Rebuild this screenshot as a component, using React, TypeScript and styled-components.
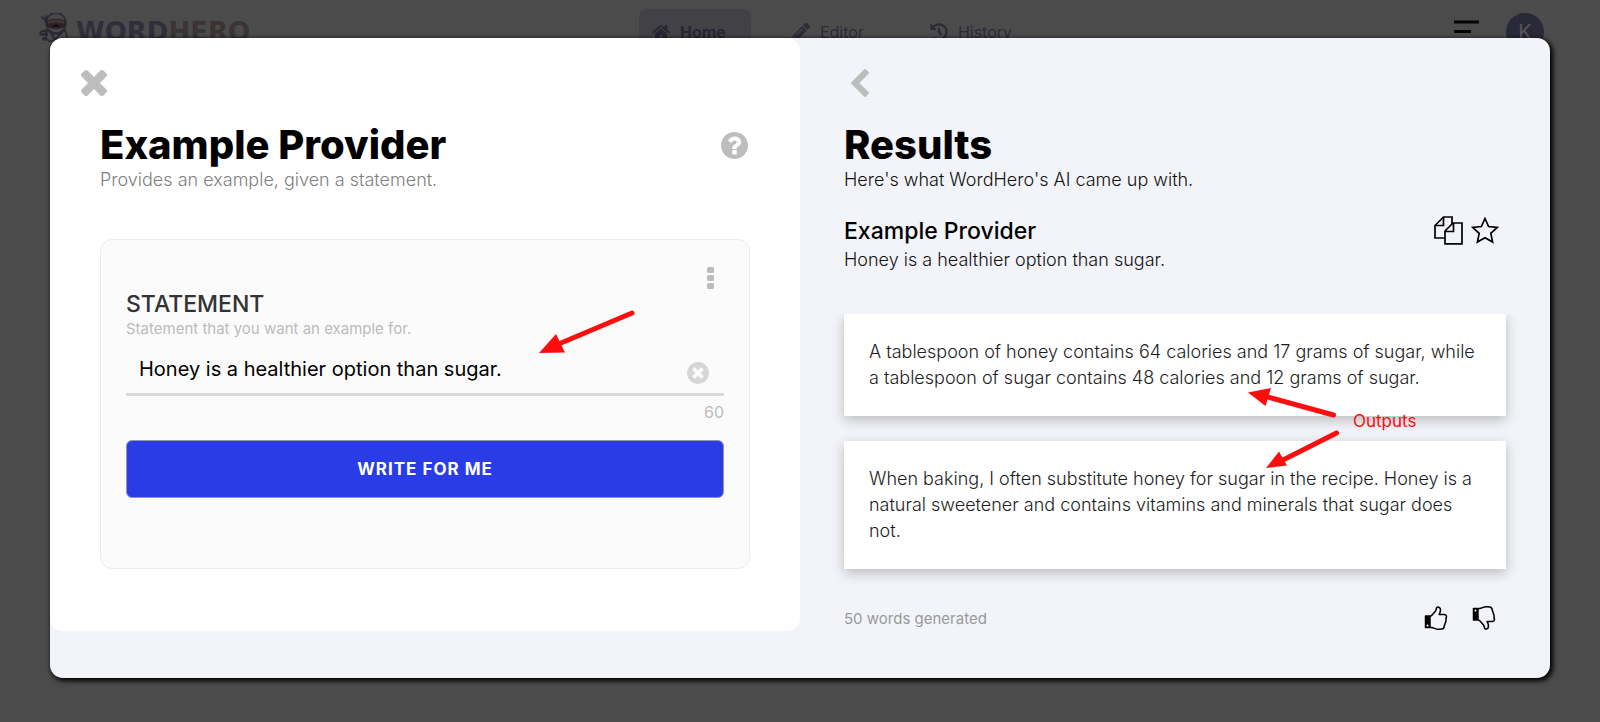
import React, { useState } from 'react';
import styled, { createGlobalStyle } from 'styled-components';
import { FaHistory, FaHome, FaPencilAlt } from 'react-icons/fa';

const GlobalStyle = createGlobalStyle`
  *, *::before, *::after { box-sizing: border-box; }
  body {
    margin: 0;
    background: #4b4b4b;
    color: #000;
    font-family: Inter, "Liberation Sans", sans-serif;
  }
  h1, h2, p, ul { margin: 0; padding: 0; }
  button, input { font: inherit; }
`;

const Page = styled.div`
  position: relative;
  min-height: 100vh;
`;

/* ---------- Dimmed site header ---------- */

const Header = styled.header`
  display: flex;
  align-items: center;
  justify-content: space-between;
  height: 64px;
  padding: 0 56px 0 39px;
  color: #2c2a3a;
`;

const Brand = styled.a`
  display: flex;
  align-items: flex-start;
  gap: 7px;
  flex: none;
  color: #302e3b;
  text-decoration: none;
  font: 700 26px/38px "DejaVu Sans", sans-serif;
`;

const BrandTail = styled.span`
  color: #3a3434;
`;

const Nav = styled.nav`
  display: flex;
  gap: 28px;
  padding-right: 28px;
`;

const NavLink = styled.a<{ $active?: boolean }>`
  display: flex;
  align-items: center;
  gap: 10px;
  height: 46px;
  padding: 0 25px 0 13px;
  border-radius: 8px;
  background: ${({ $active }) => ($active ? '#424146' : 'transparent')};
  color: ${({ $active }) => ($active ? '#272534' : '#2c2b36')};
  font-size: 16px;
  font-weight: ${({ $active }) => ($active ? 700 : 400)};
  text-decoration: none;

  svg { width: 18px; height: 18px; }
`;

const HeaderTools = styled.div`
  display: flex;
  align-items: center;
  gap: 27px;
`;

const Avatar = styled.button`
  width: 38px;
  height: 38px;
  padding: 0;
  border: 0;
  border-radius: 50%;
  background: #2a2938;
  color: #55555a;
  font-size: 20px;
`;

/* ---------- Dialog ---------- */

const DialogLayer = styled.div`
  position: absolute;
  inset: 0;
  padding: 38px 50px 44px;
`;

const Dialog = styled.main`
  display: grid;
  grid-template-columns: 1fr 1fr;
  align-items: start;
  border-radius: 13px;
  background: #f3f4f9;
  box-shadow: 2px 2px 5px 1px #000;
`;

const ToolPanel = styled.section`
  padding: 31px 50px 62px;
  border-radius: 13px;
  background: #fff;
`;

const ResultsPanel = styled.section`
  padding: 31px 44px 48px;
`;

const IconButton = styled.button`
  display: inline-flex;
  align-items: center;
  justify-content: center;
  flex: none;
  padding: 0;
  border: 0;
  background: none;
  color: inherit;
  cursor: pointer;

  svg { display: block; }
`;

const PanelTop = styled.div<{ $indent: string }>`
  display: flex;
  height: 28px;
  margin: 0 0 24px ${({ $indent }) => $indent};
  color: #bcbdbd;
`;

const TitleRow = styled.div`
  display: flex;
  align-items: center;
  justify-content: space-between;
  padding-right: 2px;
  color: #bcbdbd;
`;

const Title = styled.h1`
  color: #000;
  font-size: 40px;
  font-weight: 800;
  line-height: 48px;
`;

const Lead = styled.p<{ $muted?: boolean }>`
  color: ${({ $muted }) => ($muted ? '#808080' : '#111')};
  font-size: 18px;
  font-weight: 300;
  line-height: 22px;
`;

/* ---------- Form ---------- */

const FormCard = styled.form`
  position: relative;
  margin-top: 48px;
  padding: 25px 25px 70px;
  border: 1px solid #ececec;
  border-radius: 12px;
  background: #fbfbfb;
`;

const FormMenu = styled.div`
  display: flex;
  justify-content: flex-end;
  height: 25px;
  padding-right: 10px;
  color: #bcbcbc;
`;

const FieldLabel = styled.label`
  display: block;
  color: #333;
  font-size: 23px;
  font-weight: 500;
  line-height: 28px;
`;

const FieldHelp = styled.p`
  color: #bcbcbc;
  font-size: 15px;
  line-height: 22px;
`;

const FieldBox = styled.div`
  display: flex;
  align-items: center;
  height: 49px;
  margin-top: 7px;
  padding: 0 15px 0 13px;
  border-bottom: 3px solid #d9d9d9;
  color: #d6d6d6;

  button { padding-top: 6px; }
`;

const FieldInput = styled.input`
  flex: 1;
  min-width: 0;
  padding: 0 0 2px;
  border: 0;
  outline: 0;
  background: transparent;
  color: #000;
  font-size: 20px;
  line-height: 28px;
`;

const Counter = styled.p`
  margin: 6px 0 18px;
  color: #bcbcbc;
  font-size: 16px;
  line-height: 20px;
  text-align: right;
`;

const SubmitButton = styled.button`
  display: block;
  width: 100%;
  height: 58px;
  border: 1px solid #8f94b8;
  border-radius: 6px;
  background: #293ce5;
  color: #fff;
  font-size: 17px;
  font-weight: 700;
  letter-spacing: 1px;
  cursor: pointer;
`;

/* ---------- Results ---------- */

const ResultHead = styled.div`
  display: flex;
  align-items: flex-start;
  justify-content: space-between;
  margin-top: 25px;
`;

const ResultTitle = styled.h2`
  font-size: 23px;
  font-weight: 500;
  line-height: 30px;
`;

const ResultQuery = styled.p`
  color: #111;
  font-size: 18px;
  font-weight: 300;
  line-height: 28px;
`;

const ResultTools = styled.div<{ $gap: string }>`
  display: flex;
  align-items: center;
  gap: ${({ $gap }) => $gap};
  padding-right: 7px;
  color: #000;
`;

const ResultArea = styled.div`
  position: relative;
  margin-top: 40px;
`;

const ResultList = styled.ul`
  display: grid;
  gap: 25px;
  margin: 0 -24px -24px;
  padding: 0 24px 24px;
  overflow: hidden;
  list-style: none;
`;

const ResultCard = styled.li`
  padding: 25px;
  background: #fff;
  box-shadow: 0 4px 12px rgba(0, 0, 0, 0.24);
  color: #1c1c1c;
  font-size: 18px;
  font-weight: 300;
  line-height: 26px;
`;

const ResultFooter = styled.footer`
  display: flex;
  align-items: center;
  justify-content: space-between;
  height: 24px;
  margin-top: 37px;
  padding-right: 3px;
  color: #999;
  font-size: 15px;
`;

/* ---------- Annotations laid over the dialog ---------- */

const ArrowMark = styled.svg<{ $left: string; $top: string }>`
  position: absolute;
  left: ${({ $left }) => $left};
  top: ${({ $top }) => $top};
  fill: #fd0d0d;
  stroke: #fd0d0d;
  stroke-linecap: round;
  pointer-events: none;
`;

const NoteMark = styled.span`
  position: absolute;
  left: 509px;
  top: 96px;
  color: #fd0d0d;
  font-size: 17px;
  line-height: 22px;
`;

type GlyphProps = { box: string; width: number; height: number; d: string };

const Glyph = ({ box, width, height, d }: GlyphProps) => (
  <svg viewBox={box} width={width} height={height} fill="currentColor" aria-hidden="true">
    <path d={d} />
  </svg>
);

const CLOSE =
  'M1490 1322q0 40-28 68l-136 136q-28 28-68 28t-68-28l-294-294-294 294q-28 28-68 28t-68-28l-136-136q-28-28-28-68t28-68l294-294-294-294q-28-28-28-68t28-68l136-136q28-28 68-28t68 28l294 294 294-294q28-28 68-28t68 28l136 136q28 28 28 68t-28 68l-294 294 294 294q28 28 28 68z';
const CHEVRON =
  'M1427 301l-531 531 531 531q19 19 19 45t-19 45l-166 166q-19 19-45 19t-45-19l-742-742q-19-19-19-45t19-45l742-742q19-19 45-19t45 19l166 166q19 19 19 45t-19 45z';
const QUESTION =
  'M1024 1376v-192q0-14-9-23t-23-9h-192q-14 0-23 9t-9 23v192q0 14 9 23t23 9h192q14 0 23-9t9-23zm256-672q0-88-55.5-163t-138.5-116-170-41q-243 0-371 213-15 24 8 42l132 100q7 6 19 6 16 0 25-12 53-68 86-92 34-24 86-24 48 0 85.5 26t37.5 59q0 38-20 61t-68 45q-63 28-115.5 86.5t-52.5 125.5v36q0 14 9 23t23 9h192q14 0 23-9t9-23q0-19 21.5-49.5t54.5-49.5q32-18 49-28.5t46-35 44.5-48 28-60.5 12.5-81zm384 192q0 209-103 385.5t-279.5 279.5-385.5 103-385.5-103-279.5-279.5-103-385.5 103-385.5 279.5-279.5 385.5-103 385.5 103 279.5 279.5 103 385.5z';
const CLEAR =
  'M1277 1122q0-26-19-45l-181-181 181-181q19-19 19-45 0-27-19-46l-90-90q-19-19-46-19-26 0-45 19l-181 181-181-181q-19-19-45-19-27 0-46 19l-90 90q-19 19-19 46 0 26 19 45l181 181-181 181q-19 19-19 45 0 27 19 46l90 90q19 19 46 19 26 0 45-19l181-181 181 181q19 19 45 19 27 0 46-19l90-90q19-19 19-46zm387-226q0 209-103 385.5t-279.5 279.5-385.5 103-385.5-103-279.5-279.5-103-385.5 103-385.5 279.5-279.5 385.5-103 385.5 103 279.5 279.5 103 385.5z';

const NinjaLogo = () => (
  <svg width="30" height="30" viewBox="0 0 30 30" aria-hidden="true">
    <path d="M6 9L1 3l5 1 1-3 3 5z" fill="#302c38" />
    <circle cx="17" cy="10" r="10" fill="#4a484e" stroke="#2b2733" strokeWidth="1.5" />
    <path d="M7 8q10-5 20 0v4q-2 4-10 4T7 12z" fill="#2c2222" />
    <path d="M9 8q8-3 16 0v3q-8-3-16 0z" fill="#3f3636" />
    <path d="M13 13q4-3 8 0l-1 1h-6z" fill="#151015" />
    <path d="M8 17l5 4h8l5-4 2 6-2 5H10l-4-4z" fill="#4a484e" stroke="#2b2733" strokeWidth="1.5" />
    <path d="M12 20l4 7 6-7" fill="none" stroke="#2b2733" strokeWidth="2" />
    <path d="M1 18l6-2 2 5-2 7-4-1 1-4-4-1z" fill="#2c2731" />
    <path d="M3 20l3-1M4 23l3 1" stroke="#504c55" strokeWidth="1" />
  </svg>
);

const MenuLines = () => (
  <svg width="25" height="24" viewBox="0 0 25 24" stroke="#050505" strokeWidth="3" aria-hidden="true">
    <path d="M0 2h25M0 11.500h17" />
  </svg>
);

const CopyIcon = () => (
  <svg width="29" height="29" viewBox="0 0 29 29" fill="none" stroke="currentColor" strokeWidth="1.700" aria-hidden="true">
    <path d="M11 22H1V9.500L9.500 1H18v7" />
    <path d="M9.500 1v8.500H1" />
    <path d="M11 27.800V15l8-8h9v20.800z" />
    <path d="M19.500 7v8.500H11" />
  </svg>
);

const StarIcon = () => (
  <svg width="28" height="27" viewBox="0 0 28 27" fill="none" stroke="currentColor" strokeWidth="1.700" aria-hidden="true">
    <path d="M14 1.500l3.600 8 8.700 1-6.500 5.900 1.800 8.600L14 20.700 6.400 25l1.800-8.600-6.500-5.900 8.700-1z" />
  </svg>
);

const ThumbIcon = ({ down = false }: { down?: boolean }) => (
  <svg width="24" height="24" viewBox="0 0 24 24" fill="none" stroke="currentColor" strokeWidth="1.500" strokeLinejoin="round" aria-hidden="true">
    <g transform={down ? 'matrix(1 0 0 -1 0 24)' : undefined}>
      <path d="M1.500 10H6v11.500H1.500z" fill="currentColor" />
      <circle cx="3.500" cy="19.500" r="1" fill="#fff" stroke="none" />
      <path d="M6 10q1.500 0 2.500-1.500l3-3.500q.8-1.200 1-2.800Q12.800.8 14 .9q2.500.3 2.500 3.100 0 1.600-1.300 4.600l5.300-.2q1.800.2 2 2 .1 1-.6 1.700.5 1.200 0 2.500.1 1.500-.8 2.500.1 1.600-.9 2.500.2 3.200-2.600 3.500-3 .3-5.600-.2Q8.500 21.500 6 21.300" />
    </g>
  </svg>
);

const RESULTS = [
  'A tablespoon of honey contains 64 calories and 17 grams of sugar, while a tablespoon of sugar contains 48 calories and 12 grams of sugar.',
  'When baking, I often substitute honey for sugar in the recipe. Honey is a natural sweetener and contains vitamins and minerals that sugar does not.',
];

export default function App() {
  const [statement, setStatement] = useState('Honey is a healthier option than sugar.');

  return (
    <Page>
      <GlobalStyle />
      <Header>
        <Brand href="#">
          <NinjaLogo />
          <span>WORD<BrandTail>HERO</BrandTail></span>
        </Brand>
        <Nav>
          <NavLink href="#home" $active><FaHome />Home</NavLink>
          <NavLink href="#editor"><FaPencilAlt />Editor</NavLink>
          <NavLink href="#history"><FaHistory />History</NavLink>
        </Nav>
        <HeaderTools>
          <IconButton aria-label="Menu"><MenuLines /></IconButton>
          <Avatar>K</Avatar>
        </HeaderTools>
      </Header>

      <DialogLayer>
        <Dialog role="dialog" aria-label="Example Provider">
          <ToolPanel>
            <PanelTop $indent="-19px">
              <IconButton aria-label="Close">
                <Glyph box="302 366 1188 1188" width={26} height={26} d={CLOSE} />
              </IconButton>
            </PanelTop>
            <TitleRow>
              <Title>Example Provider</Title>
              <IconButton aria-label="Help">
                <Glyph box="128 128 1536 1536" width={27} height={27} d={QUESTION} />
              </IconButton>
            </TitleRow>
            <Lead $muted>Provides an example, given a statement.</Lead>

            <FormCard onSubmit={(event) => event.preventDefault()}>
              <FormMenu>
                <IconButton type="button" aria-label="More options">
                  <svg width="7" height="22" viewBox="0 0 7 22" fill="currentColor" aria-hidden="true">
                    <rect width="7" height="6" rx="1.500" />
                    <rect y="8" width="7" height="6" rx="1.500" />
                    <rect y="16" width="7" height="6" rx="1.500" />
                  </svg>
                </IconButton>
              </FormMenu>
              <FieldLabel htmlFor="statement">STATEMENT</FieldLabel>
              <FieldHelp id="statement-help">Statement that you want an example for.</FieldHelp>
              <FieldBox>
                <FieldInput
                  id="statement"
                  aria-describedby="statement-help"
                  value={statement}
                  onChange={(event) => setStatement(event.target.value)}
                />
                <IconButton type="button" aria-label="Clear" onClick={() => setStatement('')}>
                  <Glyph box="128 128 1536 1536" width={22} height={22} d={CLEAR} />
                </IconButton>
              </FieldBox>
              <Counter>60</Counter>
              <SubmitButton type="submit">WRITE FOR ME</SubmitButton>
              <ArrowMark $left="434px" $top="68px" width="104" height="50" viewBox="0 0 104 50" aria-hidden="true">
                <path d="M97 5L26 35" strokeWidth="5" />
                <path d="M4 45L21 26l9 18.500z" stroke="none" />
              </ArrowMark>
            </FormCard>
          </ToolPanel>

          <ResultsPanel>
            <PanelTop $indent="7px">
              <IconButton aria-label="Back">
                <Glyph box="410 26 1036 1612" width={18} height={28} d={CHEVRON} />
              </IconButton>
            </PanelTop>
            <Title>Results</Title>
            <Lead>Here's what WordHero's AI came up with.</Lead>

            <ResultHead>
              <div>
                <ResultTitle>Example Provider</ResultTitle>
                <ResultQuery>Honey is a healthier option than sugar.</ResultQuery>
              </div>
              <ResultTools $gap="8px">
                <IconButton aria-label="Copy"><CopyIcon /></IconButton>
                <IconButton aria-label="Favorite"><StarIcon /></IconButton>
              </ResultTools>
            </ResultHead>

            <ResultArea>
              <ResultList>
                {RESULTS.map((text) => <ResultCard key={text}>{text}</ResultCard>)}
              </ResultList>
              <ArrowMark $left="400px" $top="70px" width="98" height="88" viewBox="0 0 98 88" aria-hidden="true">
                <path d="M89.500 31L24 13M92.500 49L37 77" strokeWidth="5" />
                <path d="M4 8.500L27 4l-5.500 18zM22 84l13-16.500L43 81.500z" stroke="none" />
              </ArrowMark>
              <NoteMark>Outputs</NoteMark>
            </ResultArea>

            <ResultFooter>
              <span>50 words generated</span>
              <ResultTools $gap="24px">
                <IconButton aria-label="Good result"><ThumbIcon /></IconButton>
                <IconButton aria-label="Bad result"><ThumbIcon down /></IconButton>
              </ResultTools>
            </ResultFooter>
          </ResultsPanel>
        </Dialog>
      </DialogLayer>
    </Page>
  );
}
